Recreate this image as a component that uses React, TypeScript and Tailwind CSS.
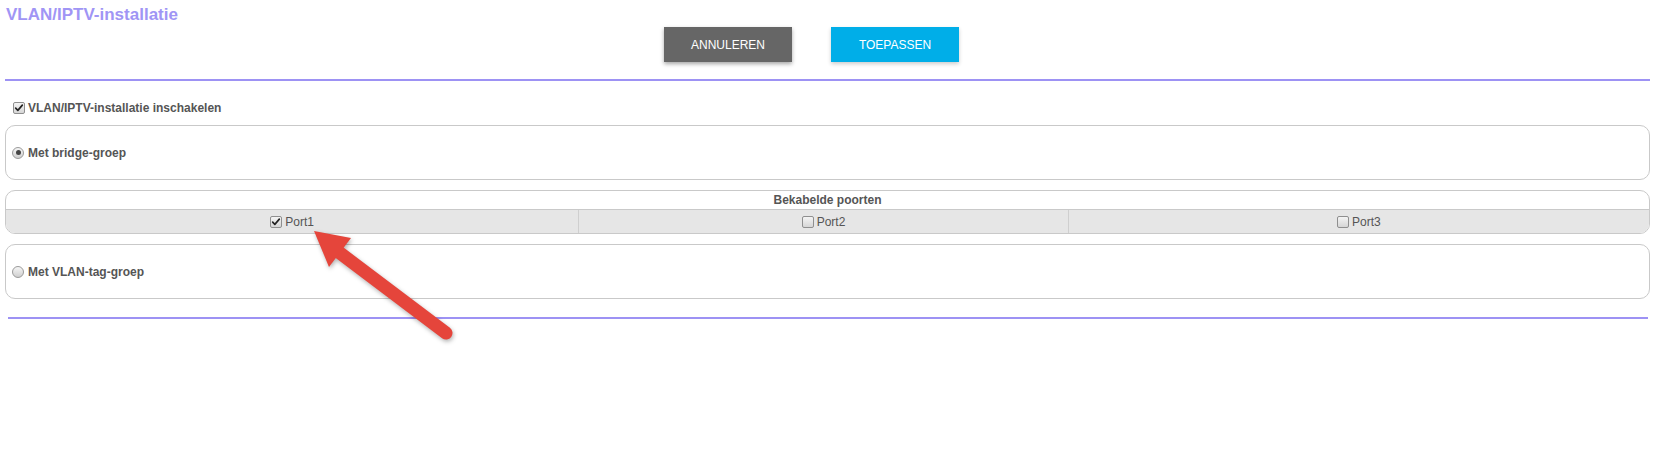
import React from "react";

function CheckBox({ checked }: { checked?: boolean }) {
  return (
    <span className="inline-flex h-[12px] w-[12px] shrink-0 items-center justify-center rounded-[2px] border border-[#8f8f8f] bg-gradient-to-b from-[#f4f4f4] to-[#d6d6d6]">
      {checked && (
        <svg viewBox="0 0 12 12" className="h-[10px] w-[10px]">
          <path d="M2 6.2 L4.6 8.8 L10 2.6" fill="none" stroke="#222" strokeWidth="2" strokeLinecap="round" strokeLinejoin="round" />
        </svg>
      )}
    </span>
  );
}

function Radio({ checked }: { checked?: boolean }) {
  return (
    <span className="inline-flex h-[12px] w-[12px] shrink-0 items-center justify-center rounded-full border border-[#9a9a9a] bg-gradient-to-b from-[#f6f6f6] to-[#cfcfcf]">
      {checked && <span className="h-[5px] w-[5px] rounded-full bg-[#444]" />}
    </span>
  );
}

const ports = [
  { name: "Port1", checked: true },
  { name: "Port2", checked: false },
  { name: "Port3", checked: false },
];

export default function App() {
  return (
    <div className="relative h-[472px] w-[1655px] bg-white font-['Liberation_Sans',Arial,sans-serif] text-[12px] text-[#555]">
      <div className="px-[5px]">
        {/* header */}
        <div className="pl-[1px] pt-[5px] text-[17px] font-bold leading-[20px] text-[#a095f5]">
          VLAN/IPTV-installatie
        </div>
        <div className="mt-[2px] flex gap-[39px] pl-[659px]">
          <button className="h-[35px] w-[128px] bg-[#666666] text-[12px] text-white shadow-[0_2px_4px_rgba(0,0,0,0.35)]">
            ANNULEREN
          </button>
          <button className="h-[35px] w-[128px] bg-[#00aee8] text-[12px] text-white shadow-[0_2px_4px_rgba(0,0,0,0.2)]">
            TOEPASSEN
          </button>
        </div>
        <div className="mt-[17px] h-[2px] bg-[#9d92f4]" />

        {/* enable */}
        <div className="mt-[17px] flex h-[20px] items-center gap-[3px] pl-[8px] font-bold">
          <CheckBox checked />
          <span>VLAN/IPTV-installatie inschakelen</span>
        </div>

        {/* bridge group */}
        <div className="mt-[7px] flex h-[55px] items-center gap-[4px] rounded-[10px] border border-[#c9c9c9] pl-[6px] font-bold">
          <Radio checked />
          <span>Met bridge-groep</span>
        </div>

        {/* wired ports */}
        <div className="mt-[10px] overflow-hidden rounded-[10px] border border-[#c9c9c9]">
          <div className="flex h-[18px] items-center justify-center font-bold">Bekabelde poorten</div>
          <div className="grid h-[24px] grid-cols-[573fr_490fr_582fr] border-t border-[#c9c9c9] bg-[#e6e6e6]">
            {ports.map((p, i) => (
              <div
                key={p.name}
                className={`flex items-center justify-center gap-[3px] ${i > 0 ? "border-l border-[#cfcfcf]" : ""}`}
              >
                <CheckBox checked={p.checked} />
                <span>{p.name}</span>
              </div>
            ))}
          </div>
        </div>

        {/* vlan tag group */}
        <div className="mt-[10px] flex h-[55px] items-center gap-[4px] rounded-[10px] border border-[#c9c9c9] pl-[6px] font-bold">
          <Radio />
          <span>Met VLAN-tag-groep</span>
        </div>

        <div className="ml-[3px] mr-[2px] mt-[18px] h-[2px] bg-[#9d92f4]" />
      </div>

      {/* annotation arrow */}
      <svg
        className="pointer-events-none absolute left-0 top-0 drop-shadow-[1px_2px_2px_rgba(0,0,0,0.3)]"
        width="1655"
        height="472"
      >
        <line x1="336" y1="250" x2="446" y2="333" stroke="#e5453b" strokeWidth="13" strokeLinecap="round" />
        <polygon points="314,231 351,238 329,267" fill="#e5453b" />
      </svg>
    </div>
  );
}
